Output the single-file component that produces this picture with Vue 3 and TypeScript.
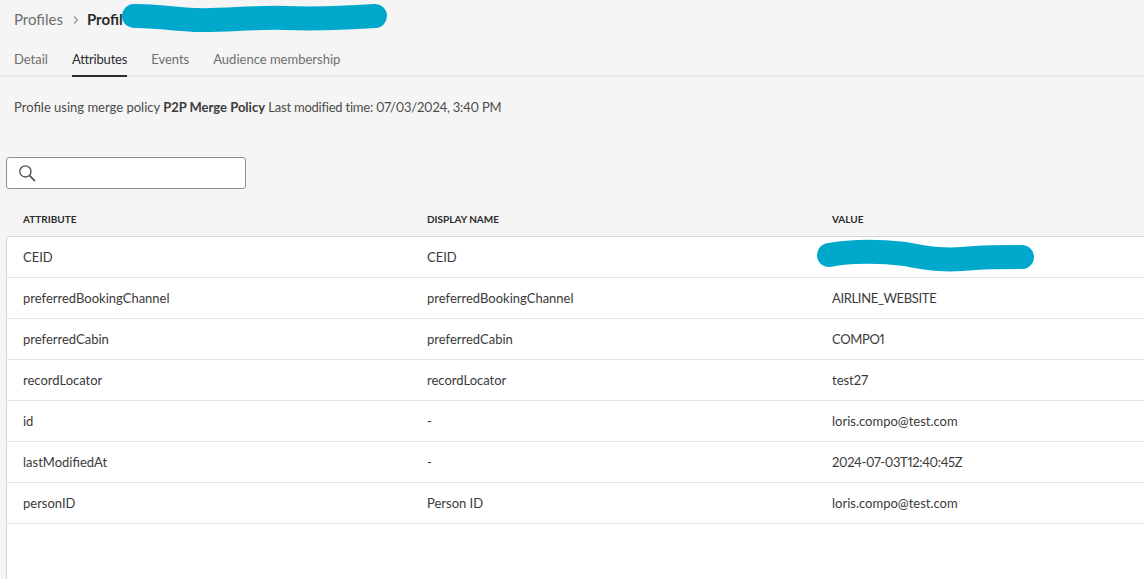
<script setup lang="ts">
interface Row { attr: string; name: string; value: string; tight?: boolean }
const tabs: string[] = ['Detail', 'Attributes', 'Events', 'Audience membership']
const rows: Row[] = [
  { attr: 'CEID', name: 'CEID', value: '' },
  { attr: 'preferredBookingChannel', name: 'preferredBookingChannel', value: 'AIRLINE_WEBSITE', tight: true },
  { attr: 'preferredCabin', name: 'preferredCabin', value: 'COMPO1', tight: true },
  { attr: 'recordLocator', name: 'recordLocator', value: 'test27' },
  { attr: 'id', name: '-', value: 'loris.compo@test.com' },
  { attr: 'lastModifiedAt', name: '-', value: '2024-07-03T12:40:45Z', tight: true },
  { attr: 'personID', name: 'Person ID', value: 'loris.compo@test.com' },
]
</script>

<template>
  <div class="page">
    <nav class="crumbs">
      <span class="crumb">Profiles</span>
      <svg class="chev" width="8" height="10" viewBox="0 0 8 10"><path d="M2 1.5 5.5 5 2 8.5" fill="none" stroke="#8e8e8e" stroke-width="1.1" /></svg>
      <strong class="current">Profil</strong>
    </nav>
    <div class="tabs">
      <span v-for="t in tabs" :key="t" class="tab" :class="{ active: t === 'Attributes' }">{{ t }}</span>
    </div>
    <p class="meta">Profile using merge policy <b>P2P Merge Policy</b> <span class="modified">Last modified time: 07/03/2024, 3:40 PM</span></p>
    <div class="search">
      <svg width="18" height="18" viewBox="0 0 18 18"><circle cx="7.4" cy="7.4" r="5.6" fill="none" stroke="#4b4b4b" stroke-width="1.3" /><path d="M11.6 11.6 16.6 16.6" stroke="#4b4b4b" stroke-width="1.5" stroke-linecap="round" /></svg>
    </div>
    <div class="head">
      <span>ATTRIBUTE</span><span>DISPLAY NAME</span><span>VALUE</span>
    </div>
    <div class="table">
      <div v-for="r in rows" :key="r.attr" class="row">
        <span>{{ r.attr }}</span><span>{{ r.name }}</span><span :class="{ tight: r.tight }">{{ r.value }}</span>
      </div>
    </div>
    <svg class="scribble" width="1144" height="579" viewBox="0 0 1144 579">
      <path d="M134 16C150 15 170 19 195 20C225 21 250 17 285 18C315 19 345 18 375 16" fill="none" stroke="#00a9cc" stroke-width="24" stroke-linecap="round" />
      <path d="M829 255C850 251 880 251 905 254C930 259 945 261 975 258C990 257 1005 257 1022 257" fill="none" stroke="#00a9cc" stroke-width="24" stroke-linecap="round" />
    </svg>
  </div>
</template>

<style>
html, body { margin: 0; background: #f5f5f5; overflow: hidden; }
</style>

<style scoped>
.page {
  position: relative;
  width: 1144px;
  height: 579px;
  overflow: hidden;
  background: #f5f5f5;
  color: #4b4b4b;
  font-family: "Lato", "Liberation Sans", sans-serif;
  font-size: 13px;
  font-variant-numeric: proportional-nums;
}
.crumbs { height: 39px; padding: 0 0 1px 14px; box-sizing: border-box; display: flex; align-items: center; gap: 8px; }
.crumb { font-size: 15px; color: #6e6e6e; }
.chev { margin-top: 1px; margin-left: 1px; margin-right: -1px; }
.current { font-size: 15px; font-weight: 700; color: #2c2c2c; }
.tabs { height: 38px; padding-left: 14px; display: flex; gap: 24px; border-bottom: 2px solid #e6e6e6; box-sizing: border-box; align-items: stretch; }
.tab { display: flex; align-items: center; padding-top: 4px; color: #6e6e6e; margin-bottom: -2px; border-bottom: 2px solid transparent; }
.tab.active { color: #2c2c2c; border-bottom-color: #2c2c2c; letter-spacing: -0.2px; }
.meta { margin: 0; height: 80px; padding: 21px 0 0 14px; box-sizing: border-box; line-height: 18px; }
.meta b { color: #3c3c3c; }
.modified { letter-spacing: -0.23px; }
.search { margin-left: 6px; width: 240px; height: 32px; box-sizing: border-box; background: #fff; border: 1px solid #8e8e8e; border-radius: 3px; display: flex; align-items: center; padding-left: 11px; }
.head { height: 47px; padding-left: 23px; display: grid; grid-template-columns: 404px 405px 1fr; align-items: center; font-size: 10px; font-weight: 700; color: #2c2c2c; padding-top: 13px; box-sizing: border-box; }
.table { margin-left: 6px; height: 400px; background: #fff; border: 1px solid #d5d5d5; border-right: 0; border-bottom: 0; border-top-left-radius: 4px; box-sizing: border-box; }
.row { height: 41px; padding-left: 16px; box-sizing: border-box; display: grid; grid-template-columns: 404px 405px 1fr; align-items: center; border-bottom: 1px solid #e3e3e3; color: #3a3a3a; }
.tight { letter-spacing: -0.35px; }
.scribble { position: absolute; left: 0; top: 0; pointer-events: none; }
</style>
